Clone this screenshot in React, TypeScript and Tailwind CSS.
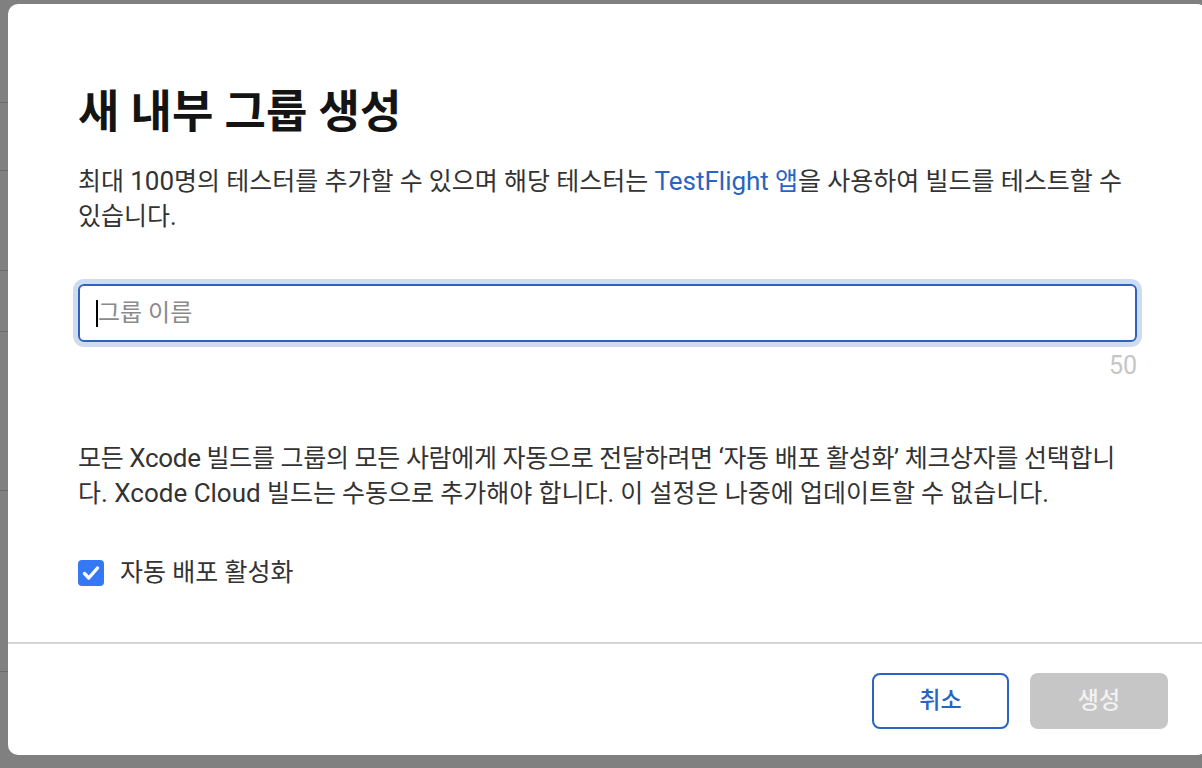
import React from "react";

const font = { fontFamily: 'Roboto, "Noto Sans CJK KR", sans-serif' };

// rows of the page behind the dimmed overlay
const backdropRows = [103, 68, 100, 61, 159, 181, 100];

function CheckMark() {
  return (
    <svg viewBox="0 0 26 26" className="h-[26px] w-[26px]">
      <rect x="0" y="0" width="26" height="26" rx="4" fill="#3478f6" />
      <path
        d="M6.5 13.5l4.3 4.5 8.7-10"
        fill="none"
        stroke="#fff"
        strokeWidth="3.4"
        strokeLinecap="round"
        strokeLinejoin="round"
      />
    </svg>
  );
}

// latin runs need a touch more size to keep the reference's width
function L({ children }: { children: React.ReactNode }) {
  return <span className="text-[26px]">{children}</span>;
}

export default function App() {
  return (
    <div
      className="relative h-[768px] w-[1202px] overflow-hidden bg-[#808080]"
      style={font}
    >
      {/* page behind the modal */}
      <div className="flex flex-col">
        {backdropRows.map((h, i) => (
          <div
            key={i}
            className="border-b border-[#6c6c6c]"
            style={{ height: h }}
          />
        ))}
      </div>

      {/* modal */}
      <div className="absolute left-[8px] top-[4px] flex h-[751px] w-[1199px] flex-col rounded-[10px] bg-white">
        <div className="flex-1 px-[70px] pt-[85px]">
          <h1 className="text-[45px] font-bold leading-[48px] text-[#141414]">
            새 내부 그룹 생성
          </h1>
          <p className="mt-[27px] text-[25px] leading-[35px] text-[#333]">
            <span className="block whitespace-nowrap">
              최대 <L>100</L>명의 테스터를 추가할 수 있으며 해당 테스터는{" "}
              <span className="text-[#2a63c1]">
                <L>TestFlight</L> 앱
              </span>
              을 사용하여 빌드를 테스트할 수
            </span>
            <span className="block whitespace-nowrap">있습니다.</span>
          </p>

          <div className="mt-[50px] flex h-[58px] items-center rounded-[6px] border-2 border-[#2b63c3] px-[16px] shadow-[0_0_0_5px_#cfdcf0]">
            <span className="h-[27px] w-[2px] bg-black" />
            <span className="text-[24px] text-[#8a8a8a]">그룹 이름</span>
          </div>
          <div className="mt-[6px] text-right text-[25px] leading-[35px] text-[#c6c6c6]">
            50
          </div>

          <p className="mt-[58px] text-[25px] leading-[35px] text-[#333]">
            <span className="block whitespace-nowrap tracking-[-0.3px]">
              모든 <L>Xcode</L> 빌드를 그룹의 모든 사람에게 자동으로
              전달하려면 ‘자동 배포 활성화’ 체크상자를 선택합니
            </span>
            <span className="block whitespace-nowrap">
              다<L>. Xcode Cloud</L> 빌드는 수동으로 추가해야 합니다. 이
              설정은 나중에 업데이트할 수 없습니다.
            </span>
          </p>

          <label className="mt-[44px] flex h-[35px] items-center gap-[16px]">
            <CheckMark />
            <span className="text-[25px] text-[#333]">자동 배포 활성화</span>
          </label>
        </div>

        <div className="flex h-[113px] justify-end gap-[21px] border-t-2 border-[#d4d4d4] pr-[39px] pt-[29px]">
          <button className="h-[56px] w-[137px] rounded-[8px] border-2 border-[#2b63c3] text-[23px] font-medium text-[#2b63c3]">
            취소
          </button>
          <button className="h-[56px] w-[138px] rounded-[8px] bg-[#c6c6c6] text-[23px] font-medium text-[#f2f2f2]">
            생성
          </button>
        </div>
      </div>
    </div>
  );
}
